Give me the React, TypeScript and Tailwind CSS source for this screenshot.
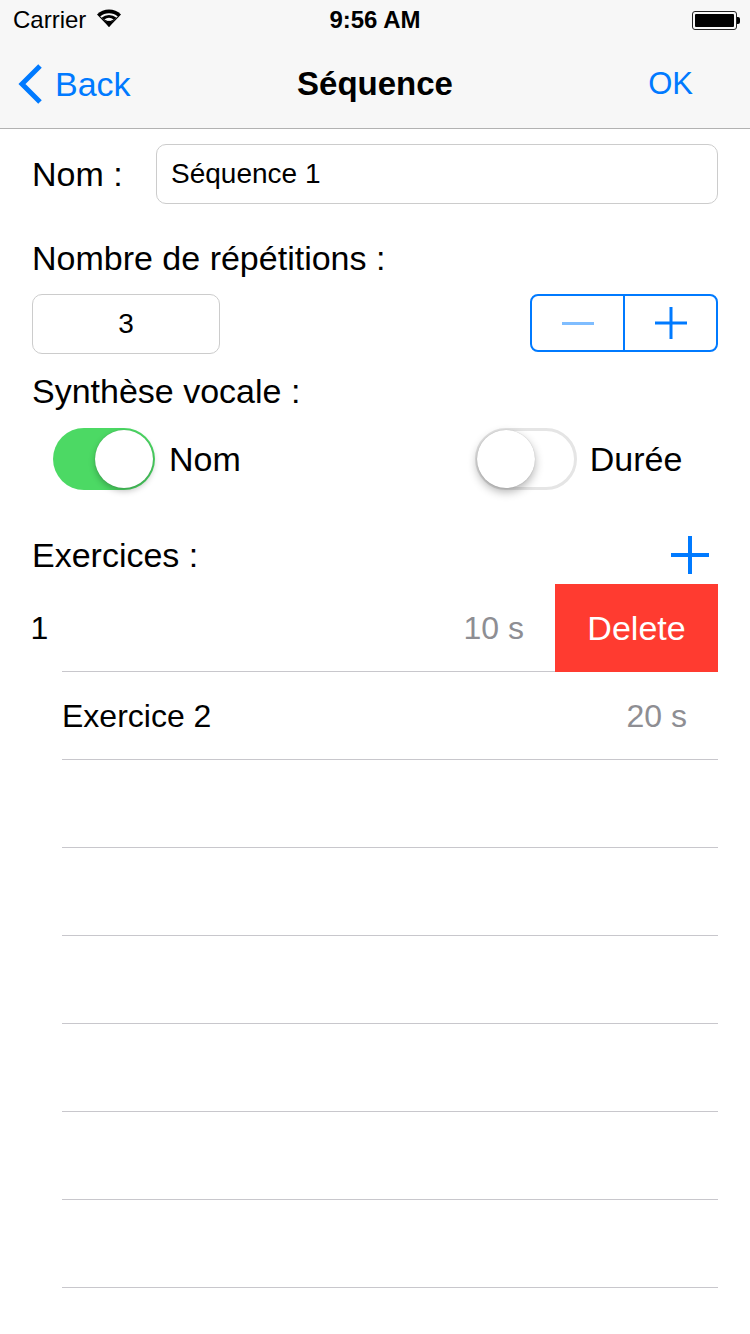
import React from "react";

const font = { fontFamily: '"Liberation Sans", Arial, sans-serif' };

function Wifi() {
  return (
    <svg width="26" height="18" viewBox="0 0 26 18">
      <path d="M13 18 L1 5.5 A17 17 0 0 1 25 5.5 Z" fill="#000" />
      <path d="M13 15 L4.2 7.6 A13.5 13.5 0 0 1 21.8 7.6 Z" fill="#f7f7f7" />
      <path d="M13 15 L5.5 8.8 A11.5 11.5 0 0 1 20.5 8.8 Z" fill="#000" />
      <path d="M13 12.5 L8.3 10.6 A7.5 7.5 0 0 1 17.7 10.6 Z" fill="#f7f7f7" />
      <path d="M13 18 L9.4 13.2 A5.5 5.5 0 0 1 16.6 13.2 Z" fill="#000" />
    </svg>
  );
}

function Toggle({ on }: { on: boolean }) {
  return on ? (
    <div className="flex h-[62px] w-[102px] shrink-0 items-center justify-end rounded-full bg-[#4cd964] p-[2px]">
      <div className="h-[58px] w-[58px] rounded-full bg-white shadow-[0_3px_6px_rgba(0,0,0,0.25),0_0_1px_rgba(0,0,0,0.2)]" />
    </div>
  ) : (
    <div className="flex h-[62px] w-[102px] shrink-0 items-center justify-start rounded-full border-[3px] border-[#e5e5e5] bg-white">
      <div className="-ml-[1px] h-[58px] w-[58px] rounded-full bg-white shadow-[0_4px_10px_rgba(0,0,0,0.3),0_0_1px_rgba(0,0,0,0.25)]" />
    </div>
  );
}

function Row({ name, time }: { name: string; time: string }) {
  return (
    <div className="flex h-[88px] flex-col">
      <div className="flex h-[87px] items-center justify-between pl-[30px] pr-[31px]">
        <span className="text-[32px] text-black">{name}</span>
        <span className="text-[32px] text-[#8e8e93]">{time}</span>
      </div>
      <div className="ml-[30px] h-px bg-[#c8c7cc]" />
    </div>
  );
}

export default function App() {
  return (
    <div className="relative h-[1334px] w-[750px] overflow-hidden bg-white" style={font}>
      {/* status + nav */}
      <div className="border-b border-[#b2b2b2] bg-[#f7f7f7]">
        <div className="relative flex h-[40px] items-center px-[13px]">
          <span className="text-[24px] leading-none text-black">Carrier</span>
          <div className="ml-[10px] mt-[-4px]">
            <Wifi />
          </div>
          <span className="absolute left-0 right-0 text-center text-[24px] font-bold leading-none text-black">9:56 AM</span>
          <div className="ml-auto mr-[-3px] flex items-center">
            <div className="h-[19px] w-[45px] rounded-[3px] border border-[#222] p-[2px]">
              <div className="h-full w-full rounded-[1px] bg-black" />
            </div>
            <div className="h-[7px] w-[3px] rounded-r-[2px] bg-black" />
          </div>
        </div>
        <div className="relative flex h-[88px] items-center">
          <div className="flex items-center pl-[17px]">
            <svg width="28" height="42" viewBox="0 0 28 42">
              <polyline points="23,3 5,21 23,39" fill="none" stroke="#007aff" strokeWidth="5" strokeLinecap="butt" strokeLinejoin="miter" />
            </svg>
            <span className="ml-[10px] text-[34px] text-[#007aff]">Back</span>
          </div>
          <span className="absolute left-0 right-0 text-center text-[33px] font-bold text-black">Séquence</span>
          <span className="ml-auto mr-[57px] text-[31px] text-[#007aff]">OK</span>
        </div>
      </div>

      <div className="px-[32px]">
        {/* Nom */}
        <div className="mt-[15px] flex items-center">
          <span className="w-[124px] shrink-0 text-[34px] text-black">Nom :</span>
          <div className="flex h-[60px] flex-1 items-center rounded-[10px] border border-[#cccccc] pl-[14px]">
            <span className="text-[28px] text-black">Séquence 1</span>
          </div>
        </div>

        <div className="mt-[34px] h-[40px] text-[34px] leading-[40px] text-black">Nombre de répétitions :</div>

        <div className="mt-[16px] flex items-start justify-between">
          <div className="flex h-[60px] w-[188px] items-center justify-center rounded-[10px] border border-[#cccccc]">
            <span className="text-[28px] text-black">3</span>
          </div>
          <div className="flex h-[58px] w-[188px] rounded-[8px] border-2 border-[#007aff]">
            <div className="flex flex-1 items-center justify-center">
              <div className="h-[3px] w-[32px] bg-[#7fbdff]" />
            </div>
            <div className="w-[2px] bg-[#007aff]" />
            <div className="flex flex-1 items-center justify-center">
              <svg width="34" height="34" viewBox="0 0 34 34">
                <rect x="15.5" y="1" width="3" height="32" fill="#007aff" />
                <rect x="1" y="15.5" width="32" height="3" fill="#007aff" />
              </svg>
            </div>
          </div>
        </div>

        <div className="mt-[17px] h-[40px] text-[34px] leading-[40px] text-black">Synthèse vocale :</div>

        <div className="mt-[17px] flex h-[62px] items-center">
          <div className="ml-[21px] flex items-center">
            <Toggle on />
            <span className="ml-[14px] text-[34px] text-black">Nom</span>
          </div>
          <div className="ml-[234px] flex items-center">
            <Toggle on={false} />
            <span className="ml-[13px] text-[34px] text-black">Durée</span>
          </div>
        </div>

        <div className="mt-[45px] flex h-[40px] items-center justify-between">
          <span className="text-[34px] leading-[40px] text-black">Exercices :</span>
          <svg width="38" height="38" viewBox="0 0 38 38" className="mr-[9px]">
            <rect x="17" y="0" width="4" height="38" fill="#007aff" />
            <rect x="0" y="17" width="38" height="4" fill="#007aff" />
          </svg>
        </div>

        {/* table */}
        <div className="mt-[9px] overflow-hidden">
          <div className="flex h-[88px]">
            <div className="flex min-w-0 flex-1 flex-col overflow-hidden">
              <div className="flex h-[87px] w-[686px] shrink-0 -ml-[163px] items-center justify-between pl-[30px] pr-[31px]">
                <span className="text-[32px] text-black">Exercice 1</span>
                <span className="text-[32px] text-[#8e8e93]">10 s</span>
              </div>
              <div className="ml-[30px] h-px bg-[#c8c7cc]" />
            </div>
            <div className="flex w-[163px] shrink-0 items-center justify-center bg-[#ff3b30]">
              <span className="text-[34px] text-white">Delete</span>
            </div>
          </div>
          <Row name="Exercice 2" time="20 s" />
          <Row name="" time="" />
          <Row name="" time="" />
          <Row name="" time="" />
          <Row name="" time="" />
          <Row name="" time="" />
          <Row name="" time="" />
        </div>
      </div>
    </div>
  );
}
